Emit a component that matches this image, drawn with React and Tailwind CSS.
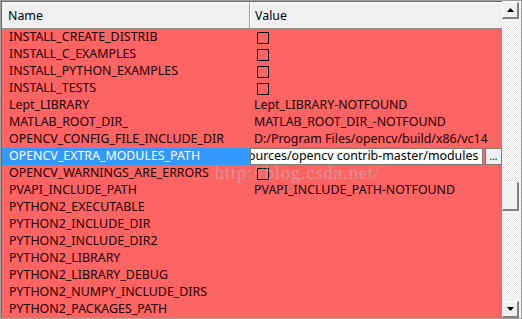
import React from "react";

const rows = [
  { name: "INSTALL_CREATE_DISTRIB", kind: "check" },
  { name: "INSTALL_C_EXAMPLES", kind: "check" },
  { name: "INSTALL_PYTHON_EXAMPLES", kind: "check" },
  { name: "INSTALL_TESTS", kind: "check" },
  { name: "Lept_LIBRARY", value: "Lept_LIBRARY-NOTFOUND" },
  { name: "MATLAB_ROOT_DIR_", value: "MATLAB_ROOT_DIR_-NOTFOUND" },
  { name: "OPENCV_CONFIG_FILE_INCLUDE_DIR", value: "D:/Program Files/opencv/build/x86/vc14" },
  { name: "OPENCV_EXTRA_MODULES_PATH", kind: "edit" },
  { name: "OPENCV_WARNINGS_ARE_ERRORS", kind: "check" },
  { name: "PVAPI_INCLUDE_PATH", value: "PVAPI_INCLUDE_PATH-NOTFOUND" },
  { name: "PYTHON2_EXECUTABLE", value: "" },
  { name: "PYTHON2_INCLUDE_DIR", value: "" },
  { name: "PYTHON2_INCLUDE_DIR2", value: "" },
  { name: "PYTHON2_LIBRARY", value: "" },
  { name: "PYTHON2_LIBRARY_DEBUG", value: "" },
  { name: "PYTHON2_NUMPY_INCLUDE_DIRS", value: "" },
  { name: "PYTHON2_PACKAGES_PATH", value: "" },
];

const ScrollButton = ({ up }) => (
  <div className="w-[17px] h-[17px] bg-[#f0f0f0] border-t border-l border-t-white border-l-white border-r-2 border-b-2 border-r-[#808080] border-b-[#808080] flex items-center justify-center">
    <svg width="7" height="4" viewBox="0 0 7 4">
      {up ? <path d="M3.5 0 L7 4 L0 4 Z" fill="#000" /> : <path d="M0 0 L7 0 L3.5 4 Z" fill="#000" />}
    </svg>
  </div>
);

const Row = ({ row }) => {
  const selected = row.kind === "edit";
  return (
    <div className="flex h-[17px] items-center">
      <div
        className={`w-[248px] h-full flex items-center pl-[7px] whitespace-nowrap overflow-hidden ${
          selected ? "bg-[#3399ff] text-white" : "text-[#1a0000]"
        }`}
      >
        {row.name}
      </div>
      <div className="flex-1 h-full flex items-center whitespace-nowrap overflow-hidden text-[#1a0000]">
        {row.kind === "check" && (
          <div className="ml-[7px] w-[12px] h-[12px] border border-black" />
        )}
        {row.kind === "edit" && (
          <div className="flex h-full w-full items-stretch">
            <div className="w-[234px] bg-white border border-[#7a7a7a] overflow-hidden flex items-center text-black">
              <span className="-ml-[3px]">ources/opencv contrib-master/modules</span>
            </div>
            <div className="ml-[2px] w-[17px] bg-[#f0f0f0] border border-[#7a7a7a] flex items-end justify-center pb-[3px] text-[10px] leading-none text-black">
              ...
            </div>
          </div>
        )}
        {row.value && <span className="pl-[4px]">{row.value}</span>}
      </div>
    </div>
  );
};

export default function App() {
  return (
    <div
      className="w-[522px] h-[319px] border border-[#a0a0a0] bg-white flex overflow-hidden relative text-[12.4px]"
      style={{ fontFamily: '"Noto Sans", "Open Sans", sans-serif' }}
    >
      <div className="w-[501px] flex flex-col border-l border-t border-[#696969]">
        <div className="flex h-[27px] bg-[#f0f0f0] border-b border-[#909090] text-black">
          <div className="w-[248px] flex items-center pl-[6px] pt-[1px] border-r border-[#a0a0a0] border-t border-t-white">
            Name
          </div>
          <div className="flex-1 flex items-center pl-[4px] pt-[1px] border-l border-l-white border-t border-t-white">
            Value
          </div>
        </div>
        <div className="flex-1 bg-[#ff6464] flex flex-col">
          {rows.map((r) => (
            <Row key={r.name} row={r} />
          ))}
        </div>
      </div>
      <div className="w-[19px] flex flex-col bg-[repeating-conic-gradient(#e4e4e4_0_25%,#ffffff_0_50%)] bg-[length:2px_2px] pt-[1px]">
        <ScrollButton up />
        <div className="h-[163px]" />
        <div className="w-[17px] h-[29px] bg-[#f0f0f0] border-t border-l border-t-white border-l-white border-r-2 border-b-2 border-r-[#808080] border-b-[#808080]" />
        <div className="flex-1" />
        <ScrollButton />
      </div>
      <div
        className="absolute left-[214px] top-[159px] text-[18px] tracking-[1px] text-[#c9a3a3]/80 pointer-events-none"
        style={{ fontFamily: '"Liberation Serif", serif' }}
      >
        http://blog.csdn.net/
      </div>
    </div>
  );
}
